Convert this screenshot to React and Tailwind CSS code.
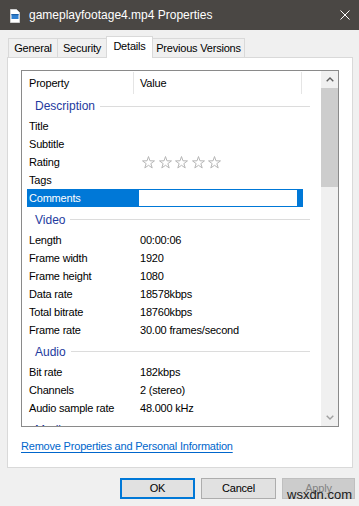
import React from 'react';

const groups = [
  {
    name: 'Description',
    first: true,
    rows: [
      ['Title', ''],
      ['Subtitle', ''],
      ['Rating', 'stars'],
      ['Tags', ''],
      ['Comments', 'edit'],
    ],
  },
  {
    name: 'Video',
    rows: [
      ['Length', '00:00:06'],
      ['Frame width', '1920'],
      ['Frame height', '1080'],
      ['Data rate', '18578kbps'],
      ['Total bitrate', '18760kbps'],
      ['Frame rate', '30.00 frames/second'],
    ],
  },
  {
    name: 'Audio',
    rows: [
      ['Bit rate', '182kbps'],
      ['Channels', '2 (stereo)'],
      ['Audio sample rate', '48.000 kHz'],
    ],
  },
  {
    name: 'Media',
    rows: [
      ['Contributing artists', ''],
      ['Year', ''],
    ],
  },
];

const tabs = [
  { label: 'General', w: 'w-[50px]' },
  { label: 'Security', w: 'w-[50px]' },
  { label: 'Details', w: 'w-[47px]', active: true },
  { label: 'Previous Versions', w: 'w-[93px]' },
];

function Star() {
  return (
    <svg width="13" height="13" viewBox="0 0 12 12">
      <polygon
        points="6,0.5 7.35,4.44 11.52,4.51 8.19,7.01 9.41,10.99 6,8.6 2.59,10.99 3.81,7.01 0.48,4.51 4.65,4.44"
        fill="none"
        stroke="#b4b4b4"
        strokeWidth="0.9"
        strokeLinejoin="round"
      />
    </svg>
  );
}

function FileIcon() {
  return (
    <svg width="10" height="14" viewBox="0 0 10 14">
      <path d="M0.5 0.5 H6.5 L9.5 3.5 V13.5 H0.5 Z" fill="#ffffff" stroke="#d0d0d0" />
      <rect x="1.5" y="5" width="7" height="5" fill="#2f80d1" />
      <rect x="1.5" y="5" width="7" height="1.2" fill="#1d5fa6" />
    </svg>
  );
}

function PropertyRow({ label, value }) {
  if (value === 'edit') {
    return (
      <div className="h-[18px] flex items-stretch">
        <div className="ml-[5px] w-[111px] pl-[2px] bg-[#0078d7] text-white flex items-center">
          {label}
        </div>
        <div className="w-[165px] border border-[#0078d7] bg-white flex justify-end">
          <div className="w-[5px] bg-[#0078d7]" />
        </div>
      </div>
    );
  }
  return (
    <div className="h-[18px] flex items-center">
      <div className="ml-[5px] w-[111px] pl-[2px] whitespace-nowrap">{label}</div>
      {value === 'stars' ? (
        <div className="ml-[4px] flex gap-[3.5px]">
          {[0, 1, 2, 3, 4].map((i) => (
            <Star key={i} />
          ))}
        </div>
      ) : (
        <div className="pl-[2px] whitespace-nowrap">{value}</div>
      )}
    </div>
  );
}

function GroupHeader({ name, first }) {
  return (
    <div className={`${first ? 'h-[22px]' : 'h-[24px] pt-[1px]'} w-[288px] flex items-center pl-[13px]`}>
      <span className="text-[12px] text-[#1e3a9e] tracking-[0px]">{name}</span>
      <div className="flex-1 h-px bg-[#dcdcdc] ml-[5px]" />
    </div>
  );
}

export default function App() {
  return (
    <div className="relative w-[359px] h-[506px] overflow-hidden bg-[#f0f0f0] text-[11px] text-black tracking-[-0.2px] font-['Liberation_Sans',Arial,sans-serif]">
      {/* title bar */}
      <div className="h-[30px] bg-[#4a4744] flex items-center text-white">
        <div className="ml-[10px] mt-[1px] flex">
          <FileIcon />
        </div>
        <div className="ml-[9px] text-[12px] tracking-[0px]">gameplayfootage4.mp4 Properties</div>
        <div className="ml-auto mr-[9px]">
          <svg width="10" height="10" viewBox="0 0 10 10">
            <path d="M0.5 0.5 L9.5 9.5 M9.5 0.5 L0.5 9.5" stroke="#ffffff" strokeWidth="1" />
          </svg>
        </div>
      </div>

      {/* tabs */}
      <div className="relative z-10 h-[27px] pl-[8px] flex items-end">
        {tabs.map((t, i) => (
          <div
            key={t.label}
            className={`${t.w} ${i > 0 ? '-ml-px' : ''} ${
              t.active
                ? 'h-[22px] -mb-px bg-white border-l border-t border-r border-[#d9d9d9] pb-[2px]'
                : 'h-[19px] bg-[#f0f0f0] border-l border-t border-r border-[#d9d9d9]'
            } flex items-center justify-center whitespace-nowrap`}
          >
            {t.label}
          </div>
        ))}
      </div>

      {/* page */}
      <div className="ml-[7px] w-[346px] h-[411px] bg-white border border-[#d9d9d9] pl-[13px] pt-[12px]">
        <div className="w-[318px] h-[357px] border border-[#8a8a8a] flex overflow-hidden">
          <div className="w-[299px] overflow-hidden">
            <div className="h-[24px] flex">
              <div className="w-[112px] pl-[7px] flex items-center border-r border-[#e5e5e5] my-[1px]">Property</div>
              <div className="w-[168px] pl-[6px] flex items-center border-r border-[#e5e5e5] my-[1px]">Value</div>
            </div>
            {groups.map((g) => (
              <div key={g.name}>
                <GroupHeader name={g.name} first={g.first} />
                {g.rows.map(([label, value]) => (
                  <PropertyRow key={label} label={label} value={value} />
                ))}
              </div>
            ))}
          </div>
          {/* scrollbar */}
          <div className="w-[17px] bg-[#f0f0f0] flex flex-col">
            <div className="h-[17px] flex items-center justify-center">
              <svg width="8" height="5" viewBox="0 0 8 5">
                <path d="M0.7 4.3 L4 1 L7.3 4.3" fill="none" stroke="#606060" strokeWidth="1.4" />
              </svg>
            </div>
            <div className="h-[99px] bg-[#cdcdcd]" />
            <div className="flex-1" />
            <div className="h-[17px] flex items-center justify-center">
              <svg width="8" height="5" viewBox="0 0 8 5">
                <path d="M0.7 0.7 L4 4 L7.3 0.7" fill="none" stroke="#a0a0a0" strokeWidth="1.4" />
              </svg>
            </div>
          </div>
        </div>
        <div className="mt-[12px] leading-[14px] text-[#0066cc] underline underline-offset-2 whitespace-nowrap">
          Remove Properties and Personal Information
        </div>
      </div>

      {/* buttons */}
      <div className="mt-[10px] pl-[120px] flex gap-[6px] text-[11px]">
        <button className="w-[75px] h-[21px] border-2 border-[#0078d7] bg-[#e1e1e1] flex items-center justify-center">
          OK
        </button>
        <button className="w-[75px] h-[21px] border border-[#adadad] bg-[#e1e1e1] flex items-center justify-center">
          Cancel
        </button>
        <button className="w-[73px] h-[21px] border border-[#bfbfbf] bg-[#cccccc] text-[#838383] flex items-center justify-center">
          Apply
        </button>
      </div>

      <div className="absolute left-[287px] top-[487px] text-[13px] leading-[16px] tracking-[0px] text-[#1a1a1a]">
        wsxdn.com
      </div>
    </div>
  );
}
